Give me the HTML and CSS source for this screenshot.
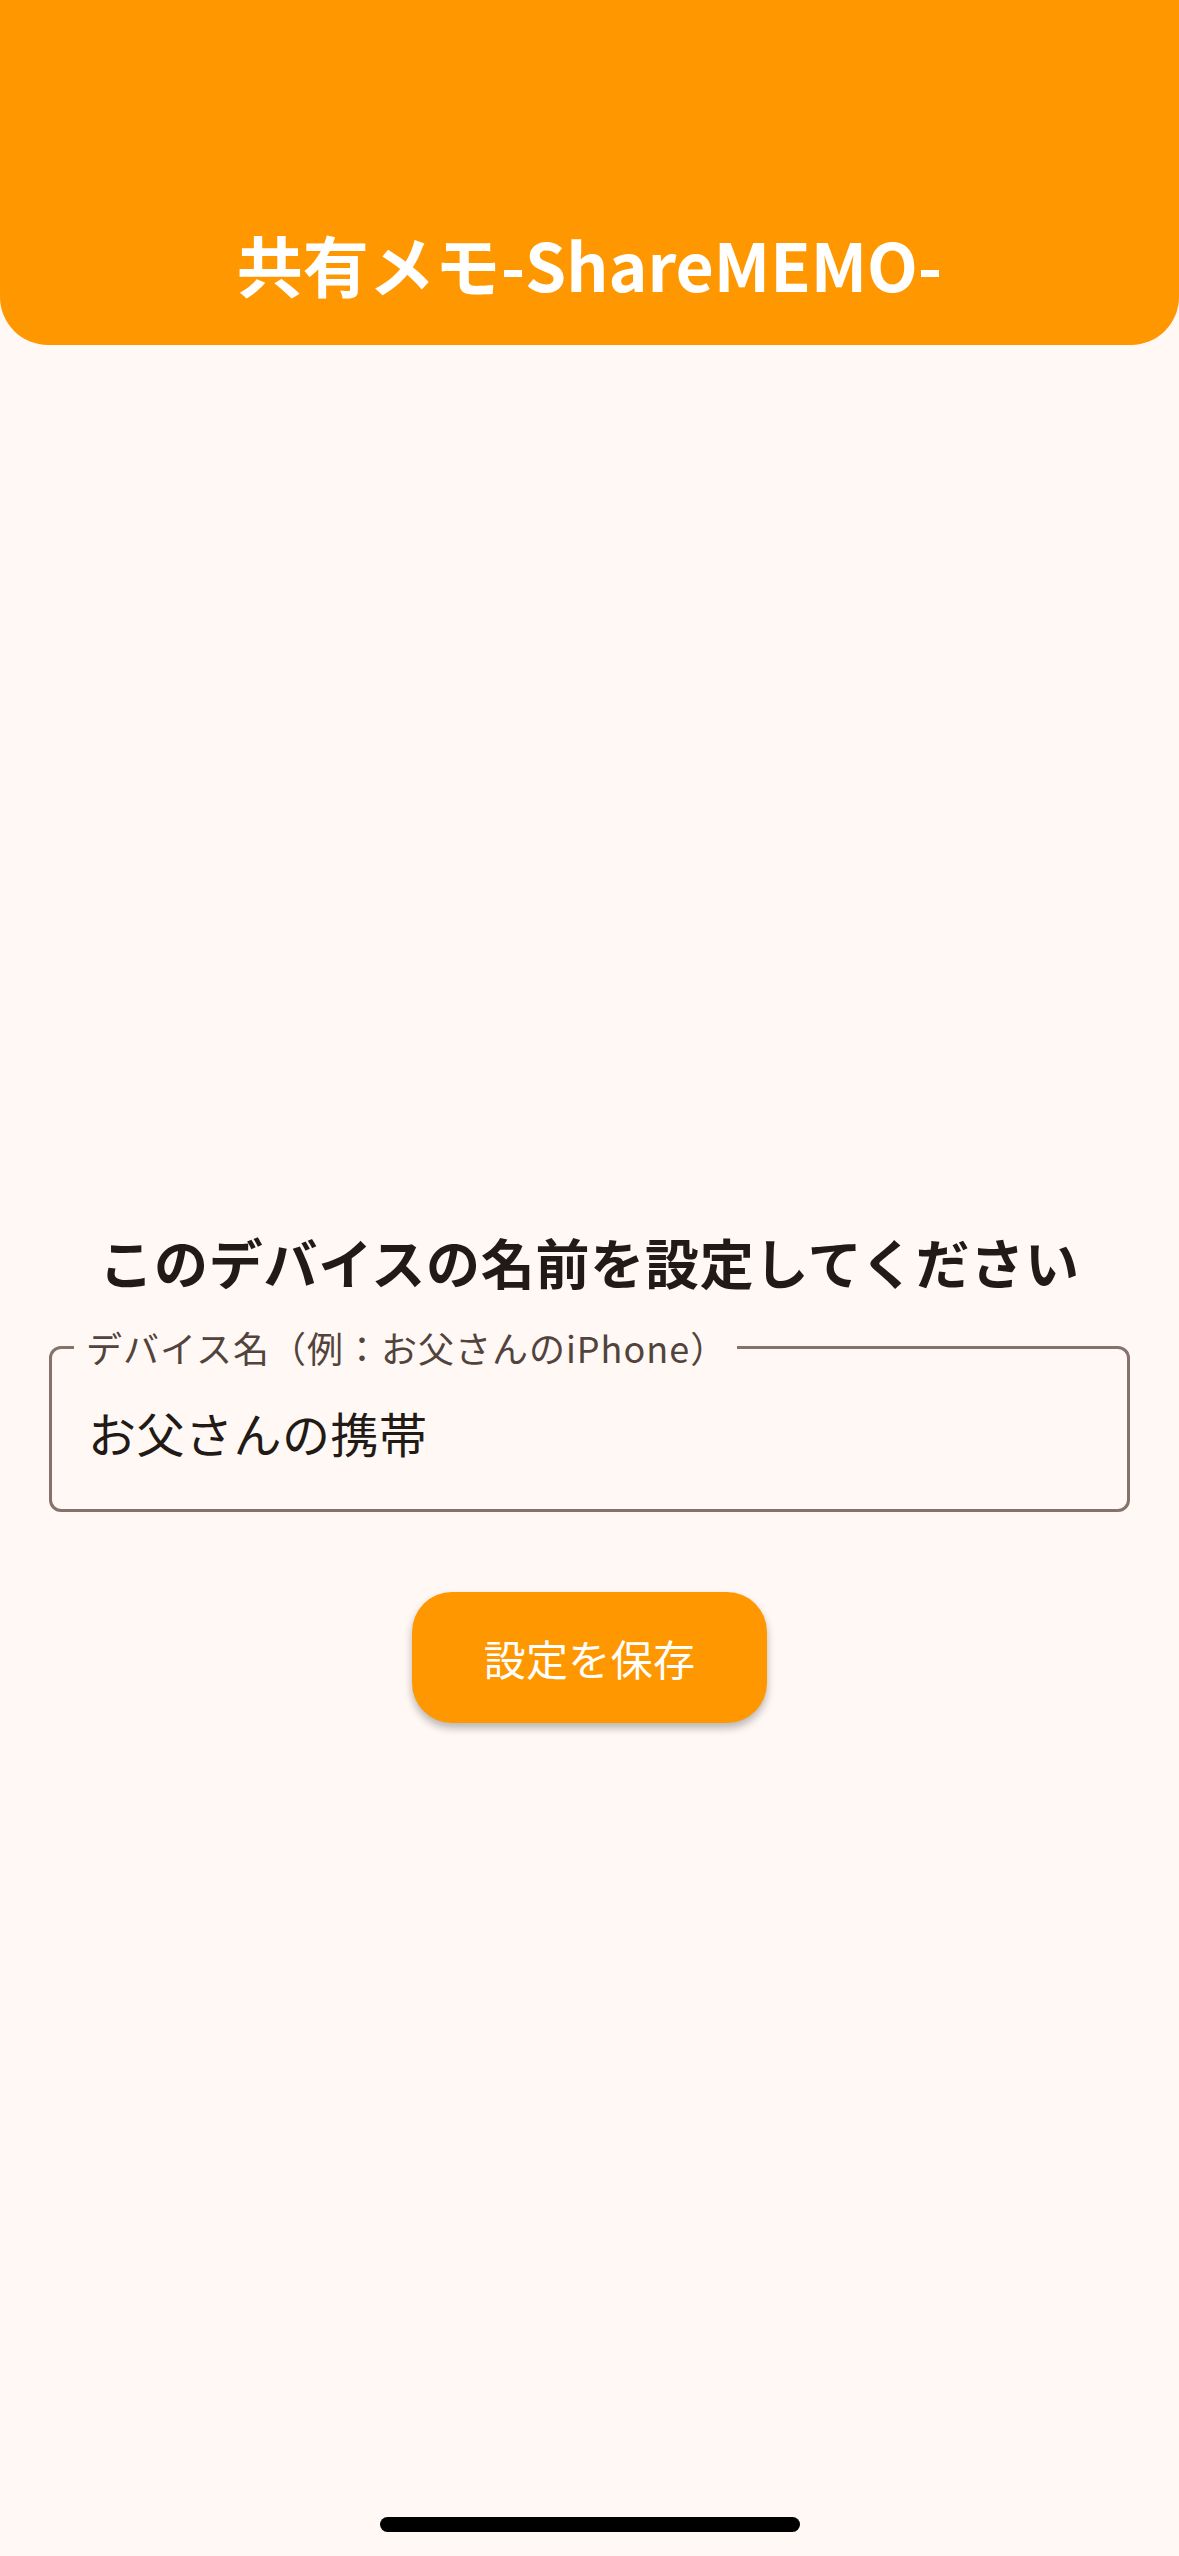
FILE: index.html
```html
<!DOCTYPE html>
<html lang="ja">
<head>
<meta charset="utf-8">
<title>共有メモ-ShareMEMO-</title>
<link rel="stylesheet" href="styles.css">
</head>
<body>
<div class="screen">
  <header class="app-bar">
    <h1 class="app-title">共有メモ-ShareMEMO-</h1>
  </header>
  <main class="content">
    <h2 class="prompt">このデバイスの名前を設定してください</h2>
    <div class="field">
      <span class="field-label">デバイス名（例：お父さんのiPhone）</span>
      <span class="field-value">お父さんの携帯</span>
    </div>
    <div class="actions">
      <button class="save-btn" type="button">設定を保存</button>
    </div>
  </main>
  <div class="home-bar"><span class="home-indicator"></span></div>
</div>
</body>
</html>
```

FILE: styles.css
```css
* { box-sizing: border-box; }

html, body {
  margin: 0;
  padding: 0;
  background: #fff8f5;
}

body {
  font-family: "Noto Sans CJK JP", "Noto Sans", sans-serif;
  color: #211a15;
}

.screen {
  width: 1179px;
  height: 2556px;
  display: flex;
  flex-direction: column;
  background: #fff8f5;
}

.app-bar {
  height: 345px;
  flex: 0 0 auto;
  background: #ff9800;
  border-radius: 0 0 48px 48px;
  display: flex;
  align-items: flex-end;
  justify-content: center;
  padding-bottom: 49px;
}

.app-title {
  margin: 0;
  font-size: 66px;
  line-height: 66px;
  font-weight: 700;
  color: #ffffff;
  letter-spacing: 0;
}

.content {
  flex: 1 1 auto;
  display: flex;
  flex-direction: column;
  padding: 885px 49px 0;
}

.prompt {
  margin: 0;
  font-size: 54px;
  line-height: 64px;
  font-weight: 700;
  text-align: center;
  letter-spacing: 0.75px;
  color: #211a15;
}

.field {
  position: relative;
  margin-top: 52px;
  height: 166px;
  border: 3px solid #85736b;
  border-radius: 12px;
  display: flex;
  align-items: center;
  padding: 6px 36px 0;
}

.field-label {
  position: absolute;
  left: 22px;
  top: -20px;
  padding: 0 10px 0 12px;
  background: #fff8f5;
  font-size: 36px;
  line-height: 36px;
  color: #52443c;
  letter-spacing: 1px;
}

.field-value {
  font-size: 48px;
  line-height: 64px;
  letter-spacing: 0.5px;
  color: #211a15;
}

.actions {
  display: flex;
  justify-content: center;
  margin-top: 80px;
}

.save-btn {
  width: 355px;
  height: 131px;
  border: none;
  border-radius: 40px;
  background: #ff9800;
  color: #ffffff;
  font-family: "Noto Sans CJK JP", "Noto Sans", sans-serif;
  font-size: 42px;
  line-height: 42px;
  font-weight: 400;
  letter-spacing: 0.3px;
  box-shadow: 0 5px 9px rgba(0, 0, 0, 0.28);
  padding: 0;
}

.home-bar {
  flex: 0 0 auto;
  height: 39px;
  display: flex;
  justify-content: center;
  align-items: flex-start;
}

.home-indicator {
  width: 420px;
  height: 15px;
  border-radius: 8px;
  background: #000000;
}
```
